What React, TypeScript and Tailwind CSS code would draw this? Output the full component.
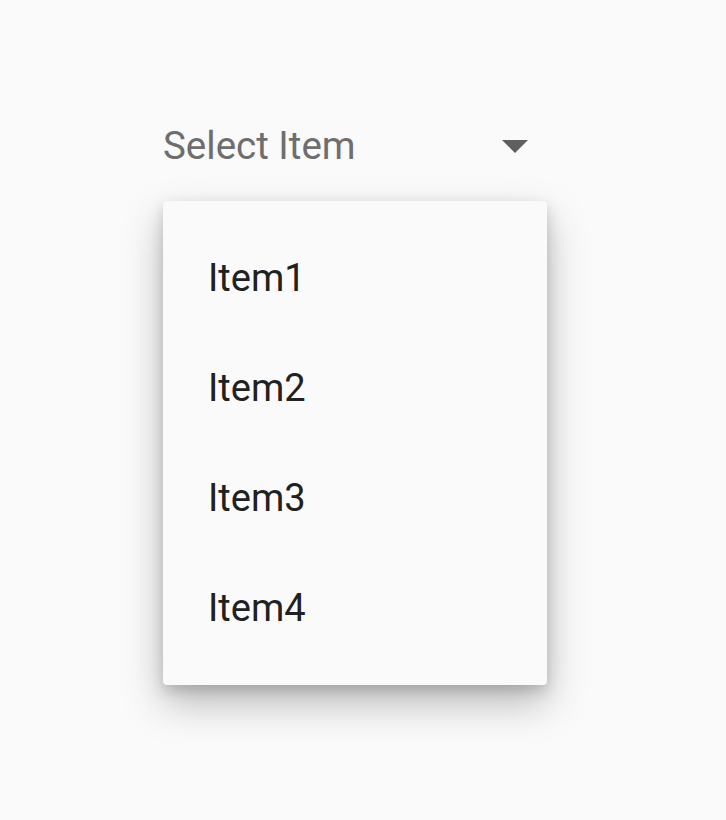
import { useState } from 'react';

const items = ['Item1', 'Item2', 'Item3', 'Item4'];

export default function App() {
  const [selected, setSelected] = useState<string | null>(null);

  return (
    <div className="min-h-screen w-full bg-[#fafafa] font-['Roboto',sans-serif]">
      <div className="flex flex-col pl-[163px] pt-[119px]">
        <div className="flex h-[54px] w-[365px] items-center justify-between">
          <span className="text-[38.5px] leading-none text-[#6e6e6e]">{selected ?? 'Select Item'}</span>
          <svg width="26" height="13" viewBox="0 0 26 13">
            <path d="M0 0 L26 0 L13 13 Z" fill="#5f5f5f" />
          </svg>
        </div>
        <div className="mt-[28px] w-[384px] rounded-[4px] bg-[#fafafa] py-[22px] shadow-[0_18px_40px_rgba(0,0,0,0.26),0_6px_14px_rgba(0,0,0,0.16)]">
          {items.map((item) => (
            <button
              key={item}
              onClick={() => setSelected(item)}
              className="flex h-[110px] w-full items-center pl-[45px] text-left text-[38px] leading-none text-[#212121]"
            >
              {item}
            </button>
          ))}
        </div>
      </div>
    </div>
  );
}
